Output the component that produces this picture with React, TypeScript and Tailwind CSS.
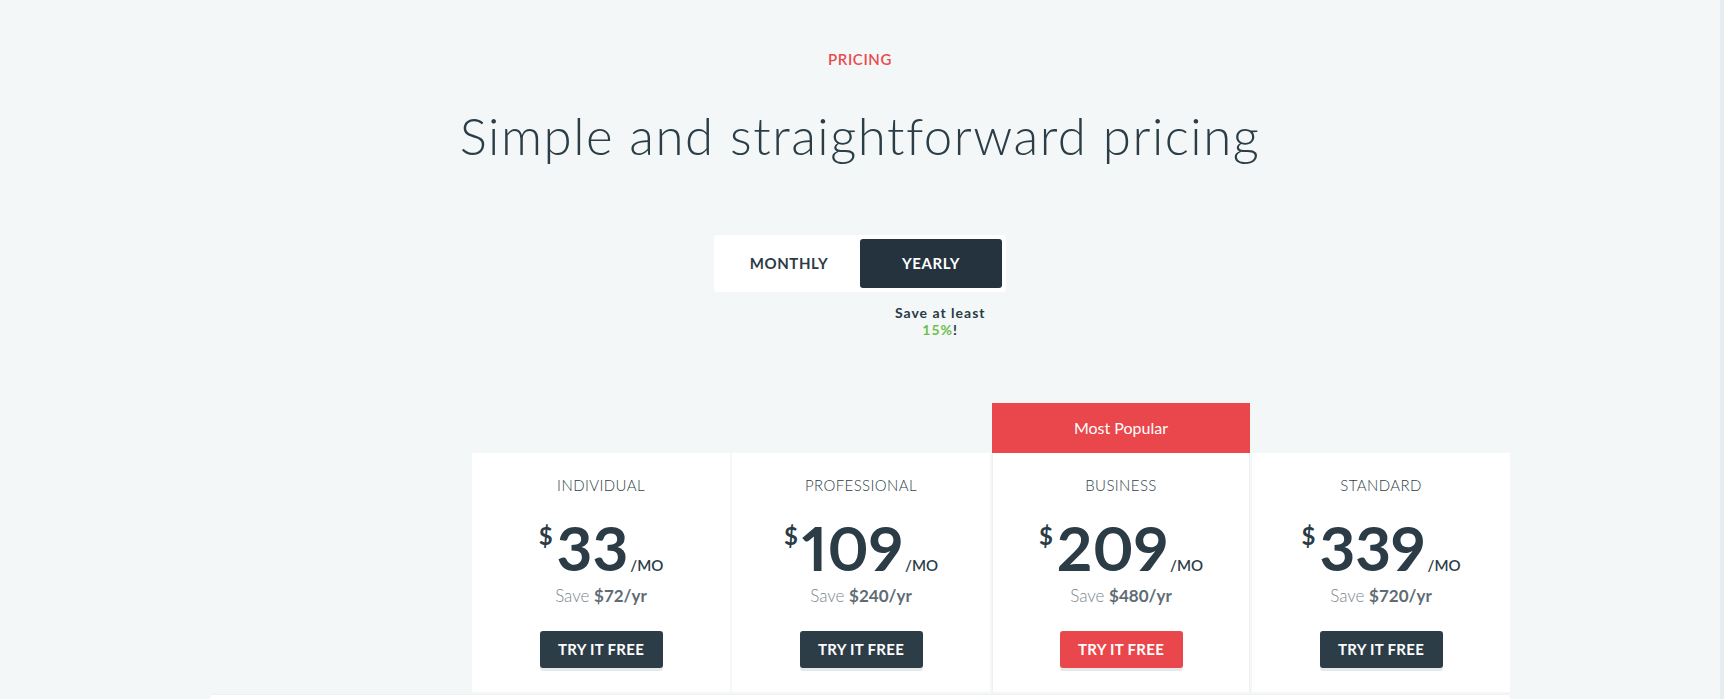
import React from "react";

interface Plan {
  name: string;
  price: string;
  save: string;
  popular?: boolean;
}

const plans: Plan[] = [
  { name: "INDIVIDUAL", price: "33", save: "$72/yr" },
  { name: "PROFESSIONAL", price: "109", save: "$240/yr" },
  { name: "BUSINESS", price: "209", save: "$480/yr", popular: true },
  { name: "STANDARD", price: "339", save: "$720/yr" },
];

function PlanCard({ plan }: { plan: Plan }) {
  return (
    <div className="flex flex-col">
      {/* Banner row */}
      {plan.popular ? (
        <div className="h-[50px] bg-[#e9474b] ml-[2px] flex items-center justify-center text-white text-[16px]">
          Most Popular
        </div>
      ) : (
        <div className="h-[50px]" />
      )}

      <div
        className={
          "ml-[2px] h-[239px] bg-white flex flex-col items-center pt-[22px] " +
          (plan.popular ? "border-x border-[#eef1f3]" : "")
        }
      >
        <h3 className="text-[15px] leading-[20px] font-light tracking-[0.4px] text-[#2f3f49]">
          {plan.name}
        </h3>

        <div className="flex items-baseline mt-[21px] h-[62px] text-[#2b3c47]">
          <span className="self-start text-[24px] leading-none font-bold mt-[8px] mr-[4px]">$</span>
          <span className="text-[62px] leading-[62px] font-bold proportional-nums">{plan.price}</span>
          <span className="text-[15px] font-semibold ml-[2px]">/MO</span>
        </div>

        <p className="mt-[7px] text-[17px] leading-[22px] font-light text-[#7b868d]">
          Save <span className="font-bold text-[#5f6c74]">{plan.save}</span>
        </p>

        <button
          className={
            "mt-[24px] w-[123px] h-[37px] rounded-[3px] text-white text-[15px] font-bold tracking-[0.3px] shadow-[0_3px_0_#e5e9eb] " +
            (plan.popular ? "bg-[#e9474b]" : "bg-[#2c3d48]")
          }
        >
          TRY IT FREE
        </button>
      </div>
    </div>
  );
}

export default function App() {
  return (
    <div
      className="h-[699px] overflow-hidden bg-[#f4f7f8] flex"
      style={{ fontFamily: "Lato, 'Noto Sans', sans-serif" }}
    >
      <main className="flex-1 flex flex-col items-center">
        <p className="pt-[49px] text-[15px] leading-[20px] font-semibold tracking-[0.6px] text-[#ea4b4b]">
          PRICING
        </p>

        <h1 className="mt-[37px] text-[51px] leading-[60px] font-light tracking-[1.5px] text-[#2b3d47]">
          Simple and straightforward pricing
        </h1>

        {/* Billing toggle */}
        <div className="mt-[69px] bg-white rounded-[3px] p-[4px] flex">
          <button className="w-[142px] h-[49px] text-[15px] font-bold tracking-[0.6px] text-[#2b3c47]">
            MONTHLY
          </button>
          <button className="w-[142px] h-[49px] rounded-[3px] bg-[#24333d] text-[15px] font-bold tracking-[0.6px] text-white">
            YEARLY
          </button>
        </div>

        <div className="w-[291px] flex justify-end pr-[20px] mt-[12px]">
          <p className="text-center text-[14px] leading-[17px] font-bold tracking-[1px] text-[#2a3a44]">
            Save at least
            <br />
            <span className="text-[#6cc04a]">15%</span>!
          </p>
        </div>

        {/* Plans grid */}
        <div className="mt-[65px] w-[1300px] grid grid-cols-5">
          <div />
          {plans.map((plan) => (
            <PlanCard key={plan.name} plan={plan} />
          ))}
        </div>

        <div className="mt-[2px] w-[1300px] h-[40px] shrink-0 bg-white border-t border-[#eef2f4]" />
      </main>
      <div className="w-[4px] bg-[#e6edf0]" />
    </div>
  );
}
